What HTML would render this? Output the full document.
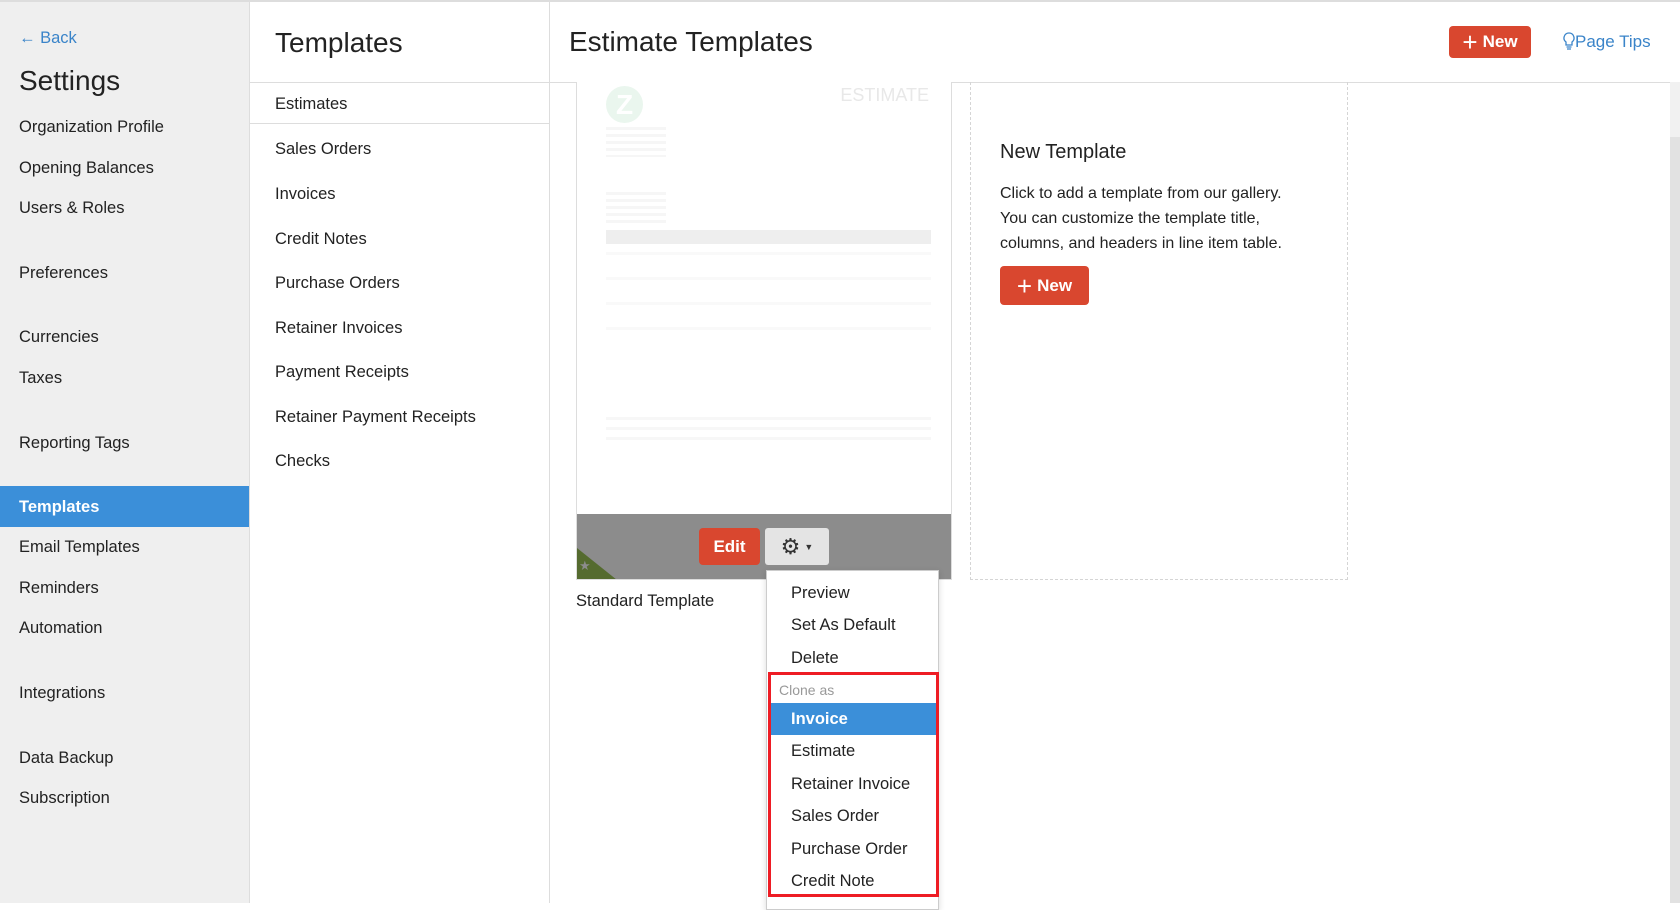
<!DOCTYPE html>
<html><head><meta charset="utf-8"><style>
*{box-sizing:border-box;margin:0;padding:0}
body{width:1680px;height:903px;overflow:hidden;font-family:"Liberation Sans",sans-serif;color:#222;background:#fff;position:relative}
.abs{position:absolute;white-space:nowrap}
#side{position:absolute;left:0;top:0;width:250px;height:903px;background:#efefef;border-right:1px solid #ddd;border-top:2px solid #ddd}
#side .it{position:absolute;left:19px;font-size:16.5px;line-height:20px}
#col2{position:absolute;left:250px;top:0;width:300px;height:903px;border-right:1px solid #ddd;border-top:2px solid #ddd}
#col2 .it{position:absolute;left:25px;font-size:16.5px;line-height:20px}
.topline{position:absolute;left:550px;top:0;width:1130px;height:2px;background:#ddd}
.btn{position:absolute;background:#d9472f;color:#fff;border-radius:4px;font-weight:bold;font-size:17px;display:flex;align-items:center;justify-content:center}
.dd .it{position:absolute;left:24px;font-size:16.5px;line-height:20px}
</style></head><body>
<div id="side">
<div class="it" style="top:26px;color:#3a84c9;font-size:16.5px">&#8592; Back</div>
<div class="it" style="top:62px;font-size:28px;line-height:34px">Settings</div>
<div class="it" style="top:115px">Organization Profile</div>
<div class="it" style="top:156px">Opening Balances</div>
<div class="it" style="top:196px">Users &amp; Roles</div>
<div class="it" style="top:261px">Preferences</div>
<div class="it" style="top:325px">Currencies</div>
<div class="it" style="top:366px">Taxes</div>
<div class="it" style="top:431px">Reporting Tags</div>
<div style="position:absolute;left:0;top:484px;width:249px;height:41px;background:#3b8fd9"></div>
<div class="it" style="top:495px;color:#fff;font-weight:bold">Templates</div>
<div class="it" style="top:535px">Email Templates</div>
<div class="it" style="top:576px">Reminders</div>
<div class="it" style="top:616px">Automation</div>
<div class="it" style="top:681px">Integrations</div>
<div class="it" style="top:746px">Data Backup</div>
<div class="it" style="top:786px">Subscription</div>
</div>
<div id="col2">
<div class="it" style="top:24px;font-size:28px;line-height:34px">Templates</div>
<div style="position:absolute;left:0;top:80px;width:299px;height:42px;border-top:1px solid #ddd;border-bottom:1px solid #ddd"></div>
<div class="it" style="top:92px">Estimates</div>
<div class="it" style="top:137px">Sales Orders</div>
<div class="it" style="top:182px">Invoices</div>
<div class="it" style="top:227px">Credit Notes</div>
<div class="it" style="top:271px">Purchase Orders</div>
<div class="it" style="top:316px">Retainer Invoices</div>
<div class="it" style="top:360px">Payment Receipts</div>
<div class="it" style="top:405px">Retainer Payment Receipts</div>
<div class="it" style="top:449px">Checks</div>
</div>
<div class="topline"></div>
<div class="abs" style="left:569px;top:25px;font-size:28px;line-height:34px">Estimate Templates</div>
<div class="btn" style="left:1449px;top:26px;width:82px;height:32px"><span style="font-size:26px;font-weight:normal;margin-right:5px;line-height:20px">+</span>New</div>
<div class="abs" style="left:1563px;top:32px;color:#3a84c9;font-size:17px">
<svg width="12" height="18" viewBox="0 0 12 18" style="vertical-align:-3px"><path d="M6 1a5 5 0 0 0-3 9v3h6v-3a5 5 0 0 0-3-9zM3.5 15h5M4 17h4" fill="none" stroke="#3a84c9" stroke-width="1.3"/></svg>Page Tips</div>
<div style="position:absolute;left:550px;top:82px;width:1120px;height:1px;background:#ddd"></div>
<div style="position:absolute;left:1670px;top:82px;width:10px;height:821px;background:#f1f1f1"></div>
<div style="position:absolute;left:1670px;top:137px;width:10px;height:766px;background:#e2e2e2"></div>
<!-- card -->
<div style="position:absolute;left:576px;top:82px;width:376px;height:498px;border:1px solid #ddd;border-top:none;background:#fff;overflow:hidden">
<div style="position:absolute;left:29px;top:4px;width:37px;height:37px;border-radius:50%;background:#eaf6ee;color:#fff;font-weight:bold;font-size:28px;text-align:center;line-height:37px">Z</div>
<div class="abs" style="right:22px;top:3px;font-size:18px;color:#e8e8e8">ESTIMATE</div>
<div style="position:absolute;left:29px;top:148px;width:325px;height:14px;background:#eee"></div>
<div style="position:absolute;left:29px;top:45px;width:60px;height:30px;background:linear-gradient(#f6f6f6 0 3px,transparent 3px 7px);background-size:100% 7px"></div>
<div style="position:absolute;left:29px;top:110px;width:60px;height:32px;background:linear-gradient(#f6f6f6 0 3px,transparent 3px 7px);background-size:100% 7px"></div>
<div style="position:absolute;left:29px;top:170px;width:325px;height:100px;background:linear-gradient(#f9f9f9 0 3px,transparent 3px 25px);background-size:100% 25px"></div>
<div style="position:absolute;left:29px;top:335px;width:325px;height:30px;background:linear-gradient(#f7f7f7 0 3px,transparent 3px 10px);background-size:100% 10px"></div>
<div style="position:absolute;left:0;top:432px;width:376px;height:66px;background:#8c8c8c"></div>
<div style="position:absolute;left:0;top:466px;width:0;height:0;border-left:40px solid #556b2f;border-top:32px solid transparent"></div>
<div class="abs" style="left:2px;top:476px;color:#8c8c8c;font-size:13px">&#9733;</div>
</div>
<div class="btn" style="left:699px;top:528px;width:61px;height:37px">Edit</div>
<div style="position:absolute;left:765px;top:528px;width:64px;height:37px;background:#e4e4e4;border-radius:3px;display:flex;align-items:center;justify-content:center;font-size:22px;color:#333">&#9881;<span style="font-size:9px;margin-left:4px">&#9660;</span></div>
<div class="abs" style="left:576px;top:592px;font-size:16.5px">Standard Template</div>
<div style="position:absolute;left:970px;top:82px;width:378px;height:498px;border:1px dashed #d5d5d5;border-top:none"></div>
<div class="abs" style="left:1000px;top:141px;font-size:20px">New Template</div>
<div class="abs" style="left:1000px;top:181px;font-size:16px;line-height:25px">Click to add a template from our gallery.<br>You can customize the template title,<br>columns, and headers in line item table.</div>
<div class="btn" style="left:1000px;top:266px;width:89px;height:39px"><span style="font-size:26px;font-weight:normal;margin-right:5px;line-height:20px">+</span>New</div>
<!-- dropdown -->
<div class="dd" style="position:absolute;left:766px;top:570px;width:173px;height:340px;background:#fff;border:1px solid #ccc;box-shadow:0 2px 6px rgba(0,0,0,.15)">
<div class="it" style="top:12px">Preview</div>
<div class="it" style="top:44px">Set As Default</div>
<div class="it" style="top:77px">Delete</div>
<div class="it" style="left:12px;top:109px;font-size:14px;color:#999">Clone as</div>
<div style="position:absolute;left:3px;top:132px;width:166px;height:32px;background:#3b8fd9"></div>
<div class="it" style="top:138px;color:#fff;font-weight:bold">Invoice</div>
<div class="it" style="top:170px">Estimate</div>
<div class="it" style="top:203px">Retainer Invoice</div>
<div class="it" style="top:235px">Sales Order</div>
<div class="it" style="top:268px">Purchase Order</div>
<div class="it" style="top:300px">Credit Note</div>
<div style="position:absolute;left:1px;top:101px;width:171px;height:225px;border:3px solid #ee1c24"></div>
</div>
</body></html>
